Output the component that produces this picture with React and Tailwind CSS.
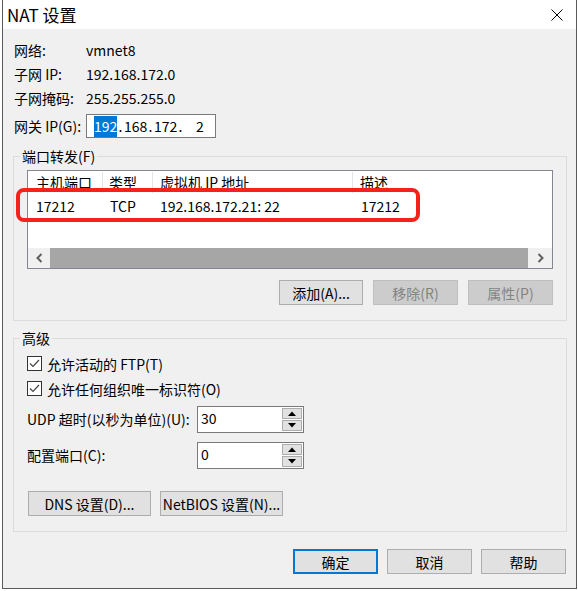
import React from 'react'

const Spinner = ({ value }) => (
  <div className="w-[107px] h-[27px] border border-[#7a7a7a] bg-white flex">
    <span className="flex-1 pl-[3px] pt-[1px] leading-[20px]">{value}</span>
    <div className="w-[20px] flex flex-col gap-[1px] py-[1px] mr-[1px]">
      <div className="flex-1 border border-[#adadad] bg-[#e1e1e1] flex items-center justify-center">
        <svg width="8" height="5" viewBox="0 0 8 5"><path d="M0 5 L4 0.5 L8 5 Z" fill="#000" /></svg>
      </div>
      <div className="flex-1 border border-[#adadad] bg-[#e1e1e1] flex items-center justify-center">
        <svg width="8" height="5" viewBox="0 0 8 5"><path d="M0 0 L4 4.5 L8 0 Z" fill="#000" /></svg>
      </div>
    </div>
  </div>
)

const Check = ({ label }) => (
  <div className="h-[25px] flex items-center">
    <div className="w-[15px] h-[15px] border border-[#333] bg-white">
      <svg width="13" height="13" viewBox="0 0 13 13">
        <polyline points="2,6.5 5,9.5 11,3" fill="none" stroke="#444" strokeWidth="1.2" />
      </svg>
    </div>
    <span className="ml-[5px] leading-[18px]">{label}</span>
  </div>
)

const Btn = ({ children, w, disabled, primary }) => (
  <button
    className={
      primary
        ? 'h-[25px] border-2 border-[#0078d7] bg-[#e1e1e1] leading-[18px]'
        : disabled
        ? 'h-[25px] border border-[#bfbfbf] bg-[#cccccc] text-[#838383] leading-[18px]'
        : 'h-[25px] border border-[#adadad] bg-[#e1e1e1] leading-[18px]'
    }
    style={{ width: w }}
  >
    {children}
  </button>
)

export default function App() {
  return (
    <div className="w-[578px] h-[591px] bg-white pl-[2px] font-['Noto_Sans_CJK_SC','Noto_Sans',sans-serif] text-[14px] text-black">
      <div className="w-[575px] h-[589px] border-x border-b border-[#5a5a5a] bg-[#f0f0f0] flex flex-col">
        {/* title bar */}
        <div className="h-[29px] bg-white flex items-center justify-between pl-[4px] pr-[13px]">
          <span className="text-[17px] leading-[20px]">NAT 设置</span>
          <svg width="12" height="12" viewBox="0 0 12 12">
            <path d="M0.5 0.5 L11.5 11.5 M11.5 0.5 L0.5 11.5" stroke="#000" strokeWidth="1" />
          </svg>
        </div>

        <div className="flex-1 pl-[10px] pr-[9px] pt-[9px]">
          <div className="pl-[1px]">
            {[
              ['网络:', 'vmnet8'],
              ['子网 IP:', '192.168.172.0'],
              ['子网掩码:', '255.255.255.0'],
            ].map(([k, v]) => (
              <div key={k} className="h-[24px] flex items-center">
                <span className="w-[72px]">{k}</span>
                <span>{v}</span>
              </div>
            ))}
            <div className="h-[24px] mt-[4px] flex items-center">
              <span className="w-[72px]">网关 IP(G):</span>
              <div className="w-[130px] h-[24px] border border-[#7a7a7a] bg-white flex items-center pl-[7px] leading-[21px]">
                <span className="w-[23px] bg-[#0078d7] text-white text-center">192</span>
                <span className="w-[7px] text-center">.</span>
                <span className="w-[23px]">168</span>
                <span className="w-[7px] text-center">.</span>
                <span className="w-[23px]">172</span>
                <span className="w-[7px] text-center">.</span>
                <span className="w-[23px] pl-[12px]">2</span>
              </div>
            </div>
          </div>

          {/* port forwarding */}
          <fieldset className="mt-[9px] border border-[#dcdcdc] pb-[15px]">
            <legend className="ml-[6px] px-[2px] leading-[18px]">端口转发(F)</legend>
            <div className="px-[13px]">
              <div className="relative mt-[5px] h-[99px] border border-[#828790] bg-white flex flex-col">
                <div className="h-[23px] flex items-center">
                  <span className="w-[75px] pl-[8px] border-r border-[#e5e5e5]">主机端口</span>
                  <span className="w-[50px] pl-[6px] border-r border-[#e5e5e5]">类型</span>
                  <span className="w-[200px] pl-[7px] border-r border-[#e5e5e5]">虚拟机 IP 地址</span>
                  <span className="pl-[7px]">描述</span>
                </div>
                <div className="h-[24px] flex items-center">
                  <span className="w-[75px] pl-[8px]">17212</span>
                  <span className="w-[50px] pl-[7px]">TCP</span>
                  <span className="w-[200px] pl-[7px]">192.168.172.21: 22</span>
                  <span className="pl-[8px]">17212</span>
                </div>
                <div className="flex-1" />
                <div className="h-[20px] flex">
                  <div className="w-[22px] bg-[#f0f0f0] flex items-center justify-center">
                    <svg width="7" height="10" viewBox="0 0 7 10">
                      <polyline points="5.5,1 1.5,5 5.5,9" fill="none" stroke="#606060" strokeWidth="2" />
                    </svg>
                  </div>
                  <div className="flex-1 bg-[#a6a6a6]" />
                  <div className="w-[24px] bg-[#f0f0f0] flex items-center justify-center">
                    <svg width="7" height="10" viewBox="0 0 7 10">
                      <polyline points="1.5,1 5.5,5 1.5,9" fill="none" stroke="#606060" strokeWidth="2" />
                    </svg>
                  </div>
                </div>
                {/* annotation */}
                <div className="absolute left-[-12px] top-[17px] w-[404px] h-[34px] border-[4px] border-[#f5221b] rounded-[8px]" />
              </div>
              <div className="mt-[11px] flex justify-end gap-[10px]">
                <Btn w={84}>添加(A)...</Btn>
                <Btn w={85} disabled>移除(R)</Btn>
                <Btn w={85} disabled>属性(P)</Btn>
              </div>
            </div>
          </fieldset>

          {/* advanced */}
          <fieldset className="mt-[8px] border border-[#dcdcdc] pb-[15px]">
            <legend className="ml-[6px] px-[2px] leading-[18px]">高级</legend>
            <div className="px-[13px]">
              <div className="mt-[4px]">
                <Check label="允许活动的 FTP(T)" />
                <Check label="允许任何组织唯一标识符(O)" />
              </div>
              <div className="mt-[5px] h-[27px] flex items-center">
                <span className="w-[170px]">UDP 超时(以秒为单位)(U):</span>
                <Spinner value="30" />
              </div>
              <div className="mt-[9px] h-[27px] flex items-center">
                <span className="w-[170px]">配置端口(C):</span>
                <Spinner value="0" />
              </div>
              <div className="mt-[22px] flex gap-[9px] pl-[1px]">
                <Btn w={123}>DNS 设置(D)...</Btn>
                <Btn w={123}>NetBIOS 设置(N)...</Btn>
              </div>
            </div>
          </fieldset>

          <div className="mt-[17px] pr-[1px] flex justify-end gap-[9px]">
            <Btn w={85} primary>确定</Btn>
            <Btn w={85}>取消</Btn>
            <Btn w={85}>帮助</Btn>
          </div>
        </div>
      </div>
    </div>
  )
}
